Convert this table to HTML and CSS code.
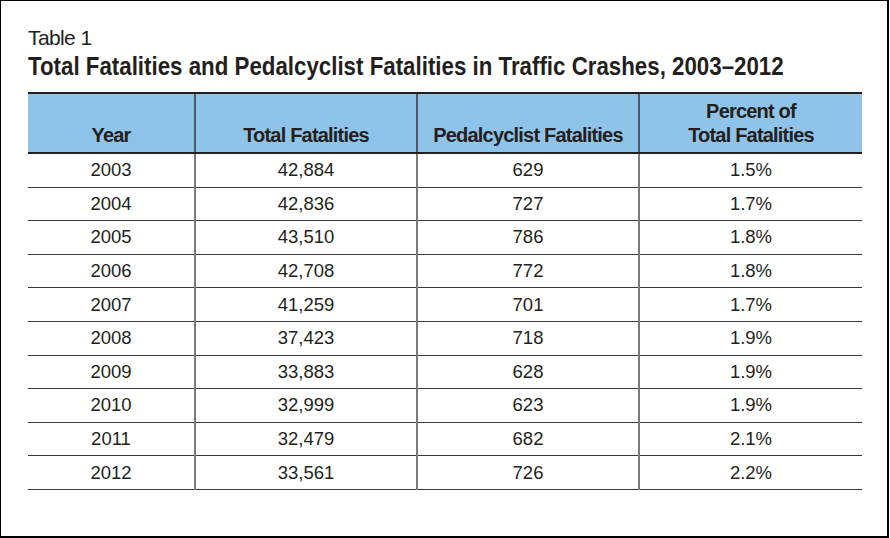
FILE: index.html
```html
<!DOCTYPE html>
<html>
<head>
<meta charset="utf-8">
<link rel="stylesheet" href="styles.css">
</head>
<body>
<div class="frame">
  <div class="label">Table 1</div>
  <h1 class="title"><span class="title-text">Total Fatalities and Pedalcyclist Fatalities in Traffic Crashes, 2003–2012</span></h1>
  <table class="data">
    <colgroup>
      <col class="c1"><col class="c2"><col class="c3"><col class="c4">
    </colgroup>
    <thead>
      <tr>
        <th>Year</th>
        <th>Total Fatalities</th>
        <th>Pedalcyclist Fatalities</th>
        <th>Percent of<br>Total Fatalities</th>
      </tr>
    </thead>
    <tbody>
      <tr><td>2003</td><td>42,884</td><td>629</td><td>1.5%</td></tr>
      <tr><td>2004</td><td>42,836</td><td>727</td><td>1.7%</td></tr>
      <tr><td>2005</td><td>43,510</td><td>786</td><td>1.8%</td></tr>
      <tr><td>2006</td><td>42,708</td><td>772</td><td>1.8%</td></tr>
      <tr><td>2007</td><td>41,259</td><td>701</td><td>1.7%</td></tr>
      <tr><td>2008</td><td>37,423</td><td>718</td><td>1.9%</td></tr>
      <tr><td>2009</td><td>33,883</td><td>628</td><td>1.9%</td></tr>
      <tr><td>2010</td><td>32,999</td><td>623</td><td>1.9%</td></tr>
      <tr><td>2011</td><td>32,479</td><td>682</td><td>2.1%</td></tr>
      <tr><td>2012</td><td>33,561</td><td>726</td><td>2.2%</td></tr>
    </tbody>
  </table>
</div>
</body>
</html>
```

FILE: styles.css
```css
html, body {
  margin: 0;
  padding: 0;
  background: #ffffff;
}
.frame {
  box-sizing: border-box;
  width: 889px;
  height: 538px;
  border-style: solid;
  border-color: #000;
  border-width: 1px 2px 2px 1px;
  padding: 25px 0 0 27px;
  color: #231f20;
  font-family: "Liberation Sans", Arial, sans-serif;
}
.label {
  font-size: 21px;
  letter-spacing: -0.6px;
  line-height: 24px;
  height: 24px;
}
.title {
  margin: 1px 0 0 0;
  font-weight: bold;
  font-size: 25px;
  line-height: 30px;
  height: 30px;
  white-space: nowrap;
}
.title-text {
  display: inline-block;
  transform: scaleX(0.892);
  transform-origin: left center;
}
.data {
  margin-top: 11px;
  border-collapse: collapse;
  width: 834px;
  table-layout: fixed;
}
.c1 { width: 167px; }
.c2 { width: 222px; }
.c3 { width: 222px; }
.c4 { width: 223px; }
.data th {
  background: #8fc4ea;
  font-weight: bold;
  font-size: 20px;
  letter-spacing: -0.8px;
  line-height: 24px;
  height: 53px;
  padding: 0 0 5px 0;
  vertical-align: bottom;
  text-align: center;
  border-top: 2px solid #231f20;
  border-bottom: 2px solid #231f20;
  border-left: 2px solid #4d5863;
}
.data td {
  font-size: 18.5px;
  text-align: center;
  height: 32.6px;
  padding: 0;
  line-height: 20px;
  border-bottom: 1px solid #3a3a3a;
  border-left: 2px solid #7a7a7a;
}
.data th:first-child,
.data td:first-child {
  border-left: none;
}
```
